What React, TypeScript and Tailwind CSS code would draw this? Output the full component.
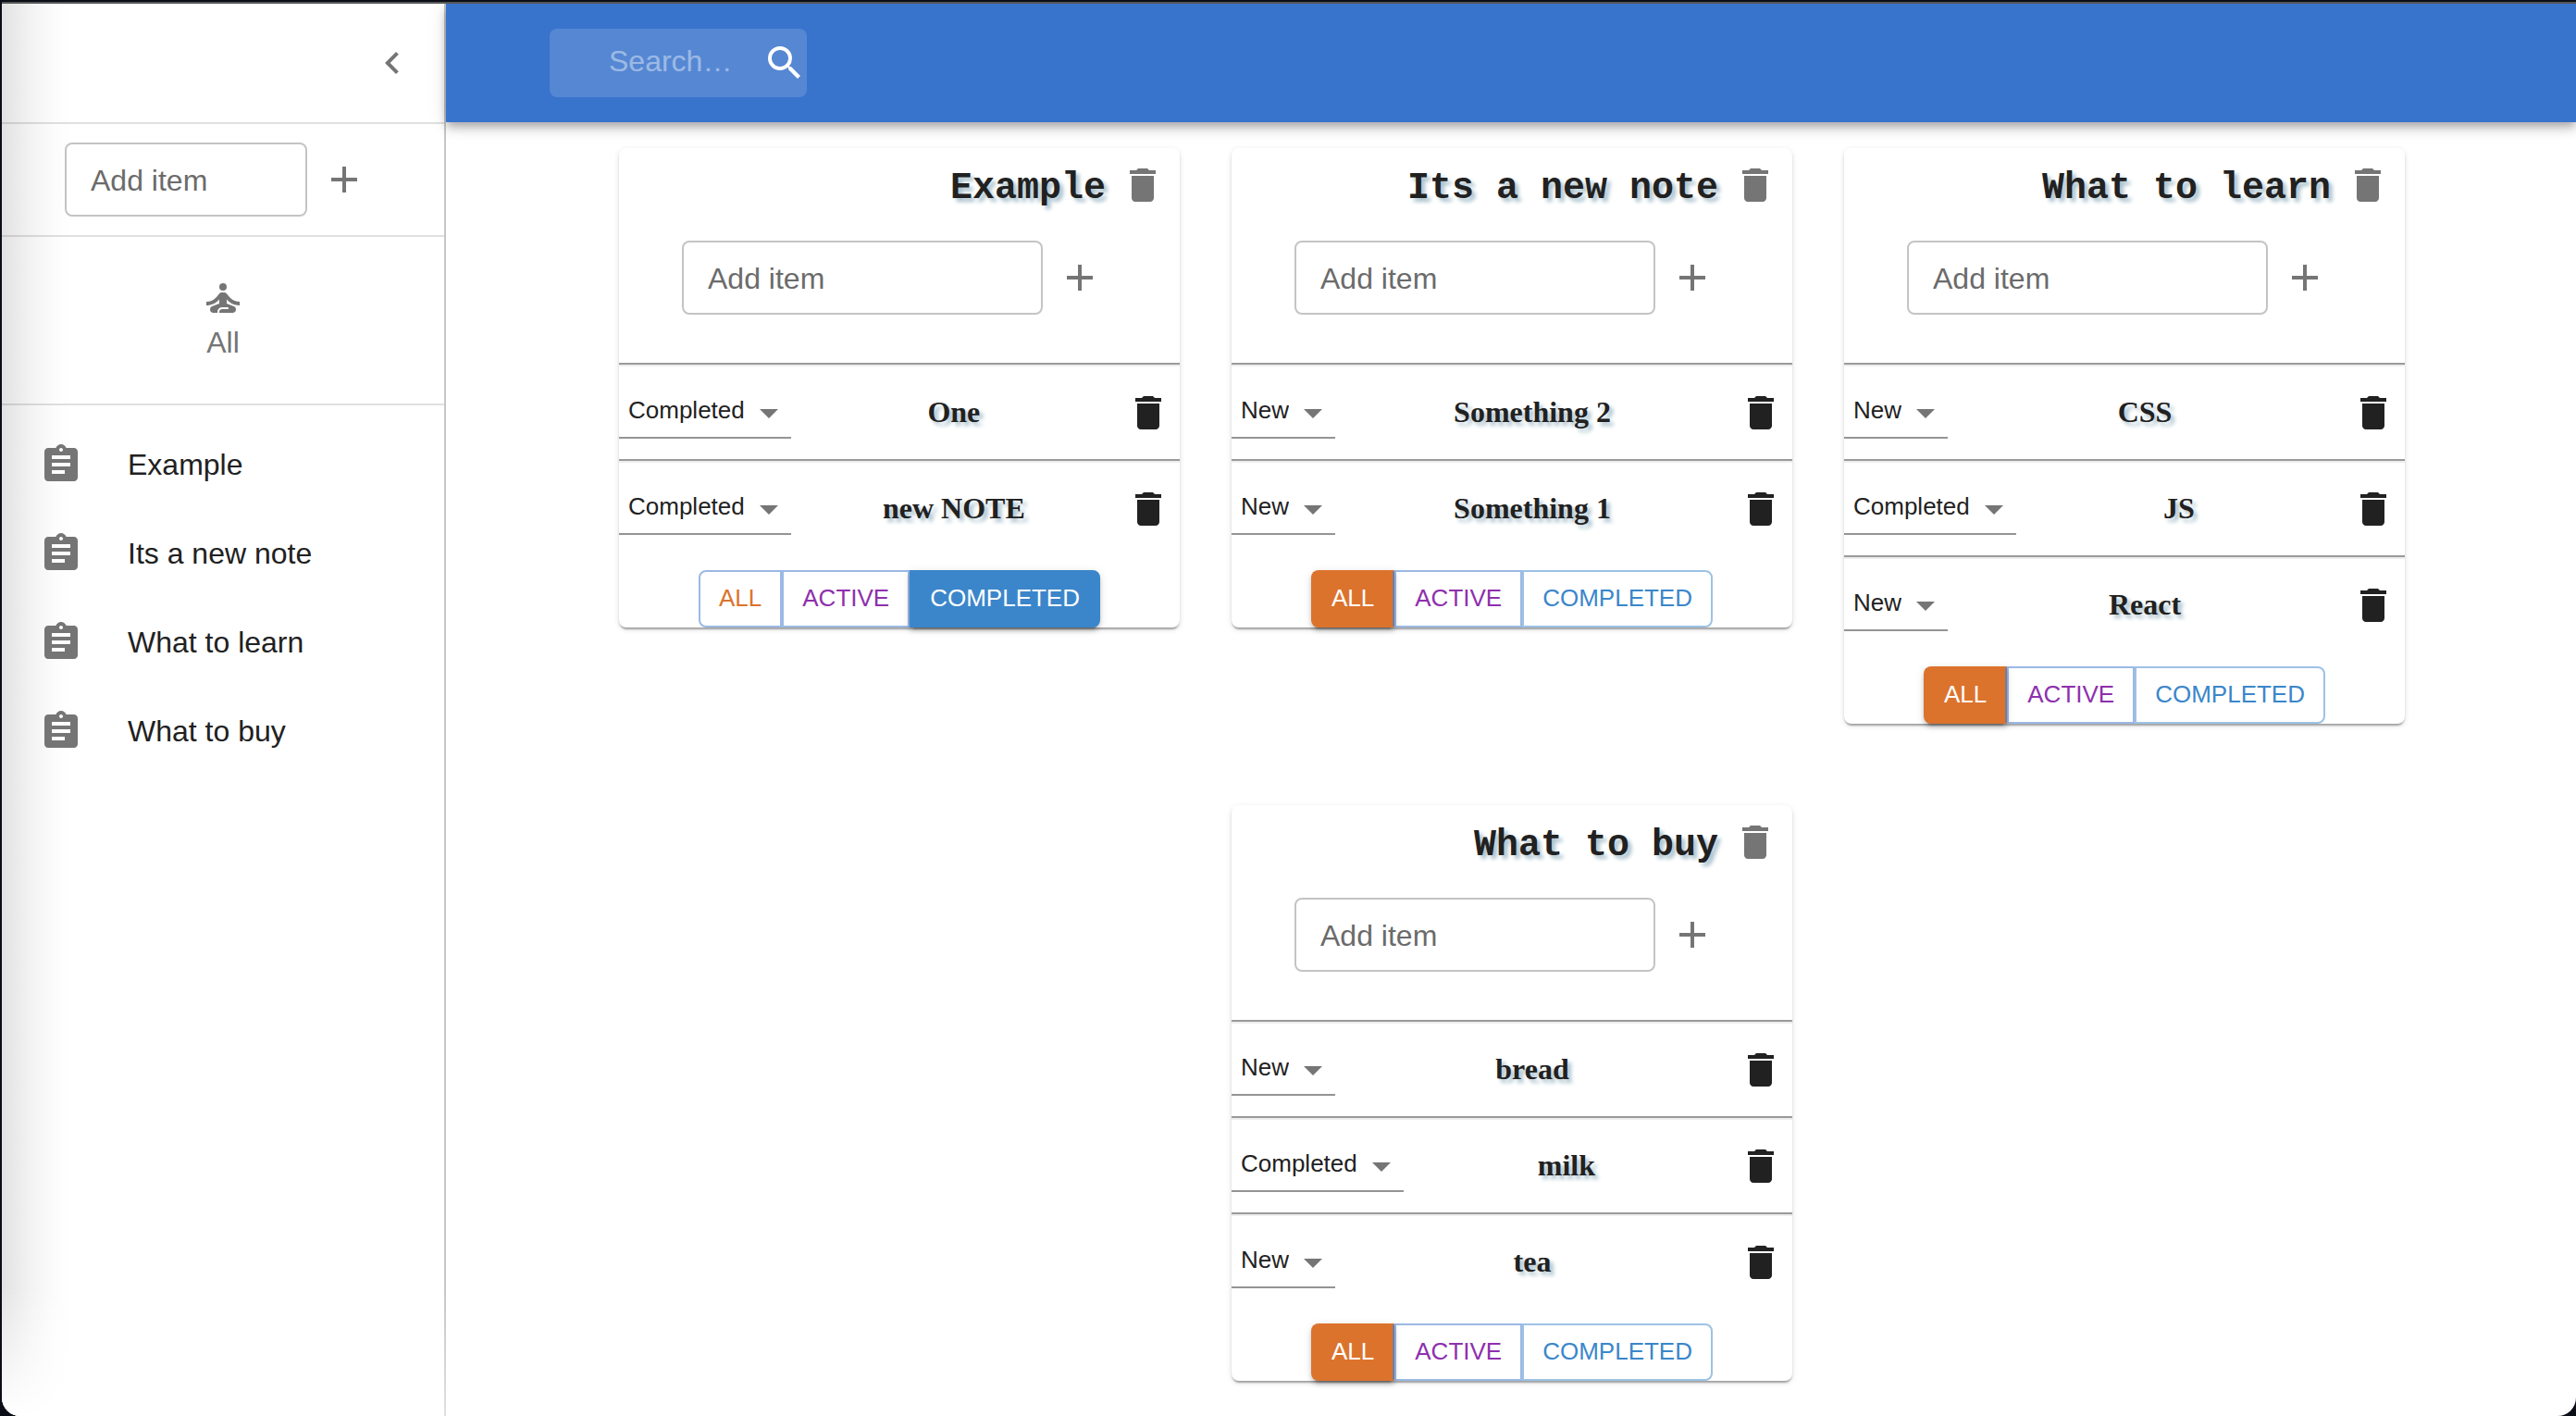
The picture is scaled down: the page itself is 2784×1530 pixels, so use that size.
import React, { useState } from 'react';
import {
  MdAdd,
  MdArrowDropDown,
  MdAssignment,
  MdChevronLeft,
  MdDelete,
  MdSearch,
  MdSelfImprovement,
} from 'react-icons/md';

type Status = 'New' | 'Completed';
type Filter = 'ALL' | 'ACTIVE' | 'COMPLETED';
type Task = { text: string; status: Status };
type Note = { title: string; filter: Filter; tasks: Task[] };

const notes: Note[] = [
  {
    title: 'Example',
    filter: 'COMPLETED',
    tasks: [
      { text: 'One', status: 'Completed' },
      { text: 'new NOTE', status: 'Completed' },
    ],
  },
  {
    title: 'Its a new note',
    filter: 'ALL',
    tasks: [
      { text: 'Something 2', status: 'New' },
      { text: 'Something 1', status: 'New' },
    ],
  },
  {
    title: 'What to learn',
    filter: 'ALL',
    tasks: [
      { text: 'CSS', status: 'New' },
      { text: 'JS', status: 'Completed' },
      { text: 'React', status: 'New' },
    ],
  },
  {
    title: 'What to buy',
    filter: 'ALL',
    tasks: [
      { text: 'bread', status: 'New' },
      { text: 'milk', status: 'Completed' },
      { text: 'tea', status: 'New' },
    ],
  },
];

const filterStyles: Record<Filter, { on: string; off: string }> = {
  ALL: {
    on: 'bg-[#dc732d] text-white border-[#dc732d] border-r-[#7b7a94]',
    off: 'text-[#dc732d] border-[#9bb9e5]',
  },
  ACTIVE: {
    on: 'bg-[#8e30ad] text-white border-[#8e30ad]',
    off: 'text-[#8e30ad] border-[#9bb9e5]',
  },
  COMPLETED: {
    on: 'bg-[#3b86ca] text-white border-[#3b86ca]',
    off: 'text-[#3b86ca] border-[#9dc2e5]',
  },
};

const raised =
  'relative shadow-[0_6px_2px_-4px_rgba(0,0,0,0.2),0_4px_4px_0_rgba(0,0,0,0.14),0_2px_10px_0_rgba(0,0,0,0.12)]';

function AddField({ label, className }: { label: string; className: string }) {
  return (
    <>
      <input
        type="text"
        aria-label={label}
        placeholder="Add item"
        className={`h-20 rounded-lg border-2 border-black/23 bg-transparent pt-0.5 pl-[26px] text-[32px] text-black/87 placeholder:text-[#6b6b6b] outline-none ${className}`}
      />
      <button type="button" aria-label={label} className="px-4 text-[#757575]">
        <MdAdd className="size-12" />
      </button>
    </>
  );
}

function TaskRow({ task }: { task: Task }) {
  return (
    <li className="border-t-2 border-[#9a9a9a]">
      <div className="flex h-[102px] items-center border-t-2 border-[#eeeeee]">
        <div className="relative shrink-0">
          <select
            aria-label={`Status of ${task.text}`}
            defaultValue={task.status}
            className="block h-14 appearance-none field-sizing-content border-b-2 border-[#949494] bg-transparent pr-[50px] pb-1 pl-[10px] text-[26px] text-[#212121] outline-none"
          >
            <option>New</option>
            <option>Active</option>
            <option>Completed</option>
          </select>
          <MdArrowDropDown className="pointer-events-none absolute top-1 right-0 size-12 text-[#757575]" />
        </div>
        <p className="flex-1 pb-0.5 text-center font-['Liberation_Serif',serif] text-[32px] leading-10 font-bold text-[#212121] [text-shadow:4px_4px_4px_#a9c0cc]">
          {task.text}
        </p>
        <button type="button" aria-label={`Delete ${task.text}`} className="px-[10px] text-[#212121]">
          <MdDelete className="size-12" />
        </button>
      </div>
    </li>
  );
}

function NoteCard({ note }: { note: Note }) {
  const [filter, setFilter] = useState<Filter>(note.filter);
  const filters: Filter[] = ['ALL', 'ACTIVE', 'COMPLETED'];
  return (
    <section className="w-[606px] rounded-lg bg-white shadow-[0_4px_2px_-2px_rgba(0,0,0,0.2),0_2px_2px_0_rgba(0,0,0,0.14),0_2px_6px_0_rgba(0,0,0,0.12)]">
      <header className="flex items-start justify-end gap-4 px-4 pt-4">
        <h2 className="font-['Liberation_Mono',monospace] text-[40px] leading-14 font-bold text-[#212121] [text-shadow:4px_4px_4px_#a9c0cc]">
          {note.title}
        </h2>
        <button type="button" aria-label={`Delete ${note.title}`} className="text-[#757575]">
          <MdDelete className="size-12" />
        </button>
      </header>
      <div className="flex items-center justify-center pt-7 pb-[52px]">
        <AddField label={`Add item to ${note.title}`} className="w-[390px]" />
      </div>
      <ul>
        {note.tasks.map((task) => (
          <TaskRow key={task.text} task={task} />
        ))}
      </ul>
      <div className="flex justify-center pt-4">
        {filters.map((name) => (
          <button
            key={name}
            type="button"
            onClick={() => setFilter(name)}
            className={`h-[62px] border-2 px-5 pb-0.5 text-[26px] leading-10 first:rounded-l-lg last:rounded-r-lg ${
              filter === name ? `${filterStyles[name].on} ${raised}` : filterStyles[name].off
            }`}
          >
            {name}
          </button>
        ))}
      </div>
    </section>
  );
}

function Sidebar() {
  return (
    <aside className="w-[480px] shrink-0 border-r-2 border-black/12 bg-[linear-gradient(to_top,white,transparent_140px),linear-gradient(to_right,#e2e2e2,#f3f3f3_32px,#fcfcfc_56px,white_76px)]">
      <div className="flex h-32 items-center justify-end pr-8">
        <button type="button" aria-label="Close menu" className="text-[#757575]">
          <MdChevronLeft className="size-12" />
        </button>
      </div>
      <div className="flex items-center border-t-2 border-black/12 py-5 pl-[68px]">
        <AddField label="Add note" className="w-[262px]" />
      </div>
      <button
        type="button"
        className="flex h-[184px] w-full flex-col items-center justify-center border-y-2 border-black/12 text-[32px] leading-12 text-[#757575]"
      >
        <MdSelfImprovement className="size-12" />
        All
      </button>
      <nav className="py-4">
        {notes.map((note) => (
          <a
            key={note.title}
            href="#"
            className="flex h-24 items-center gap-12 pl-10 text-[32px] leading-12 text-[#212121]"
          >
            <MdAssignment className="size-12 text-[#757575]" />
            {note.title}
          </a>
        ))}
      </nav>
    </aside>
  );
}

export default function App() {
  return (
    <div className="flex min-h-screen bg-[#0b0e16] pt-[2px] pl-[2px] font-['Liberation_Sans',Arial,sans-serif]">
      <div className="flex flex-1 overflow-hidden rounded-b-[20px] border-t-2 border-[#565656] bg-white">
        <Sidebar />
        <div className="min-w-0 flex-1">
          <header className="flex h-32 items-center bg-[#3873cc] pl-28 shadow-[0_4px_8px_-2px_rgba(0,0,0,0.2),0_8px_10px_0_rgba(0,0,0,0.14),0_2px_20px_0_rgba(0,0,0,0.12)]">
            <label className="flex h-[74px] w-[278px] items-center rounded-lg bg-white/15">
              <input
                type="search"
                aria-label="Search"
                placeholder="Search…"
                className="h-full min-w-0 flex-1 bg-transparent pb-1 pl-16 text-[32px] text-white outline-none placeholder:text-white/42"
              />
              <MdSearch className="size-12 shrink-0 text-white" />
            </label>
          </header>
          <main className="flex flex-wrap items-start justify-center gap-x-14 gap-y-[88px] py-7 pl-0.5">
            {notes.map((note) => (
              <NoteCard key={note.title} note={note} />
            ))}
          </main>
        </div>
      </div>
    </div>
  );
}
